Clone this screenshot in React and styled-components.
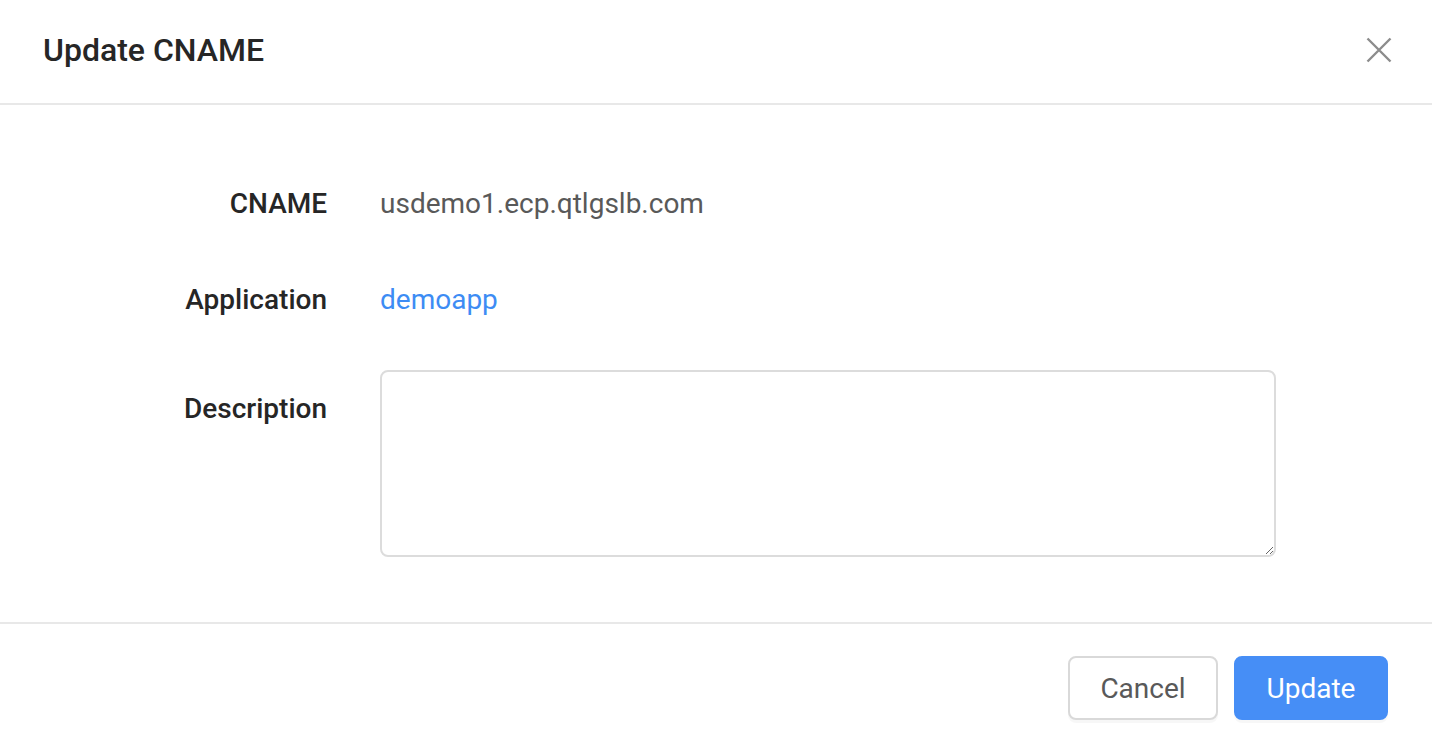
import React from "react";
import styled, { createGlobalStyle } from "styled-components";

const Global = createGlobalStyle`
  html, body { margin: 0; padding: 0; background: #fff; }
  body { font-family: Roboto, "Noto Sans", "Liberation Sans", sans-serif; }
  * { box-sizing: border-box; }
`;

const Dialog = styled.div`
  width: 1432px;
  height: 746px;
  display: flex;
  flex-direction: column;
  background: #fff;
`;

const Header = styled.header`
  height: 105px;
  padding: 0 39px 0 43px;
  display: flex;
  align-items: center;
  justify-content: space-between;
  border-bottom: 2px solid #e8e8e8;
`;

const Title = styled.h2`
  margin: 0;
  font-size: 32px;
  font-weight: 500;
  color: #262626;
  line-height: 1;
  padding-bottom: 4px;
`;

const Close = styled.button`
  border: 0;
  background: none;
  padding: 0;
  width: 28px;
  height: 28px;
  display: flex;
  align-items: center;
  justify-content: center;
  margin-bottom: 4px;
  cursor: pointer;
`;

const Body = styled.div`
  padding: 75px 0 65px;
  display: flex;
  flex-direction: column;
  gap: 48px;
  border-bottom: 2px solid #e8e8e8;
`;

const Row = styled.div`
  display: grid;
  grid-template-columns: 327px 896px;
  column-gap: 53px;
  align-items: start;
`;

const Label = styled.label`
  text-align: right;
  font-size: 28px;
  font-weight: 500;
  color: #262626;
  line-height: 48px;
  padding-top: ${(p) => p.$offset || 0}px;
`;

const Value = styled.div`
  font-size: 28px;
  line-height: 48px;
  color: ${(p) => (p.$link ? "#3d8cf4" : "#595959")};
`;

const TextArea = styled.textarea`
  width: 896px;
  height: 187px;
  margin-top: -2px;
  border: 2px solid #dcdcdc;
  border-radius: 8px;
  padding: 10px 20px;
  font-family: inherit;
  font-size: 28px;
  color: #595959;
  resize: vertical;
  outline: none;
  display: block;
`;

const Footer = styled.footer`
  flex: 1;
  display: flex;
  justify-content: flex-end;
  align-items: flex-start;
  padding: 32px 44px 0 0;
  gap: 16px;
`;

const Button = styled.button`
  height: 64px;
  width: ${(p) => p.$w}px;
  border-radius: 8px;
  font-family: inherit;
  font-size: 28px;
  font-weight: 400;
  cursor: pointer;
  border: 2px solid ${(p) => (p.$primary ? "#468ef6" : "#d9d9d9")};
  background: ${(p) => (p.$primary ? "#468ef6" : "#fff")};
  color: ${(p) => (p.$primary ? "#fff" : "#595959")};
  box-shadow: 0 3px 0 rgba(0, 0, 0, 0.03);
`;

export default function App() {
  return (
    <>
      <Global />
      <Dialog>
        <Header>
          <Title>Update CNAME</Title>
          <Close aria-label="Close">
            <svg width="26" height="26" viewBox="0 0 26 26">
              <path d="M1.5 1.5 L24.5 24.5 M24.5 1.5 L1.5 24.5" stroke="#8c8c8c" strokeWidth="2.4" fill="none" />
            </svg>
          </Close>
        </Header>
        <Body>
          <Row>
            <Label>CNAME</Label>
            <Value>usdemo1.ecp.qtlgslb.com</Value>
          </Row>
          <Row>
            <Label>Application</Label>
            <Value $link>demoapp</Value>
          </Row>
          <Row>
            <Label $offset={13}>Description</Label>
            <TextArea />
          </Row>
        </Body>
        <Footer>
          <Button $w={150}>Cancel</Button>
          <Button $w={154} $primary>Update</Button>
        </Footer>
      </Dialog>
    </>
  );
}
